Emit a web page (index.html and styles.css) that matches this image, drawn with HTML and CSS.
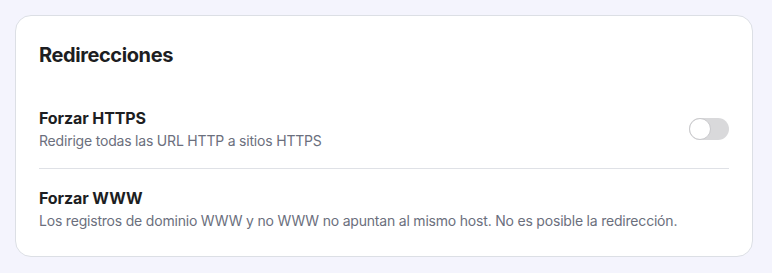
FILE: index.html
```html
<!DOCTYPE html>
<html lang="es">
<head>
  <meta charset="UTF-8" />
  <meta name="viewport" content="width=device-width, initial-scale=1.0"/>
  <title>Redirecciones</title>
  <link rel="stylesheet" href="styles.css">
</head>
<body>
  <div class="card">
    <h2 class="card-title">Redirecciones</h2>

    <div class="setting-row">
      <div class="setting-text">
        <div class="setting-name">Forzar HTTPS</div>
        <div class="setting-desc">Redirige todas las URL HTTP a sitios HTTPS</div>
      </div>
      <label class="switch">
        <input type="checkbox">
        <span class="knob"></span>
      </label>
    </div>

    <div class="setting-row">
      <div class="setting-text">
        <div class="setting-name">Forzar WWW</div>
        <div class="setting-desc">Los registros de dominio WWW y no WWW no apuntan al mismo host. No es posible la redirección.</div>
      </div>
    </div>
  </div>
</body>
</html>
```

FILE: styles.css
```css
* {
  box-sizing: border-box;
  margin: 0;
  padding: 0;
}

body {
  font-family: 'Inter', 'Noto Sans', sans-serif;
  background: #f4f4fd;
  padding: 15px;
  color: #1d1e22;
}

.card {
  width: 738px;
  height: 242px;
  background: #ffffff;
  border: 1px solid #dcdfe5;
  border-radius: 16px;
  padding: 23px 23px 9px;
}

.card-title {
  font-size: 20px;
  line-height: 32px;
  font-weight: 700;
  letter-spacing: -0.4px;
  margin-bottom: 18px;
}

.setting-row {
  display: flex;
  align-items: center;
  justify-content: space-between;
  padding: 17px 0;
}

.setting-row + .setting-row {
  border-top: 1px solid #dfe1e6;
  padding-top: 17px;
}

.setting-name {
  font-size: 16px;
  line-height: 24px;
  font-weight: 700;
  letter-spacing: -0.1px;
}

.setting-desc {
  font-size: 14px;
  line-height: 20px;
  margin-top: 1px;
  color: #6b6f7d;
  letter-spacing: -0.2px;
}

.switch {
  position: relative;
  width: 40px;
  height: 22px;
  flex-shrink: 0;
  cursor: pointer;
}

.switch input {
  display: none;
}

.knob {
  display: block;
  width: 100%;
  height: 100%;
  background: #d9d9db;
  border-radius: 11px;
}

.knob::before {
  content: "";
  position: absolute;
  left: 0;
  top: 0;
  width: 22px;
  height: 22px;
  border-radius: 50%;
  background: #ffffff;
  border: 1px solid #c9c9cc;
  box-sizing: border-box;
}
```
